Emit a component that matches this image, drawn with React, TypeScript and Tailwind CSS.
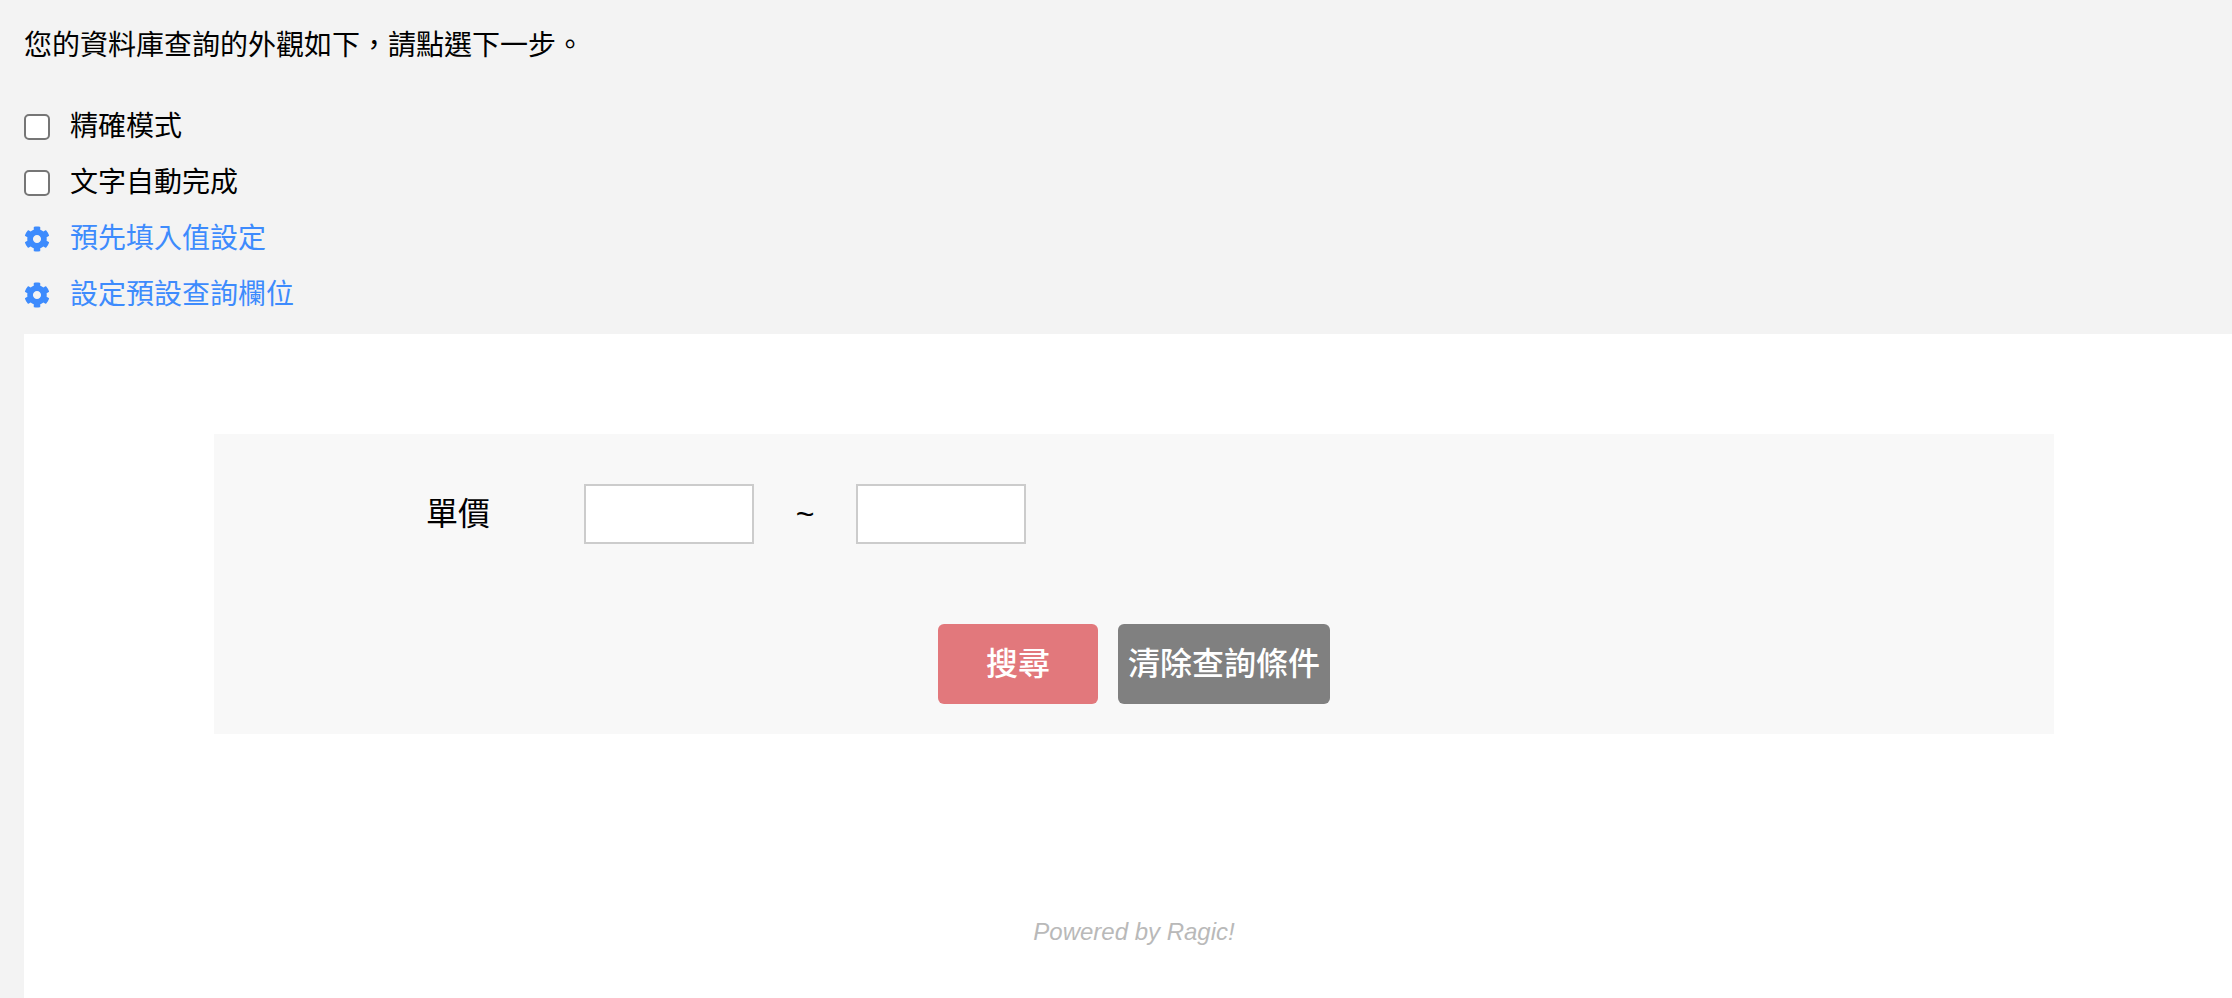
import { useState } from 'react';
import { FaCog } from 'react-icons/fa';

interface CheckOptionProps {
  id: string;
  label: string;
}

interface SettingLinkProps {
  label: string;
}

function CheckOption({ id, label }: CheckOptionProps) {
  const [checked, setChecked] = useState(false);

  return (
    <div className="flex h-14 items-center gap-5">
      <input
        id={id}
        type="checkbox"
        checked={checked}
        onChange={(e) => setChecked(e.target.checked)}
        className="size-[26px] shrink-0 appearance-none rounded-[5px] border-2 border-[#767676] bg-white checked:border-[#3d8bfd] checked:bg-[#3d8bfd]"
      />
      <label htmlFor={id}>{label}</label>
    </div>
  );
}

function SettingLink({ label }: SettingLinkProps) {
  return (
    <a href="#" className="flex h-14 w-fit items-center gap-5 text-[#3d8bfd]">
      <FaCog className="size-[26px] shrink-0" aria-hidden="true" />
      {label}
    </a>
  );
}

function QueryForm() {
  const [from, setFrom] = useState('');
  const [to, setTo] = useState('');

  const clear = () => {
    setFrom('');
    setTo('');
  };

  const inputClass = 'h-[60px] w-[170px] border-2 border-[#ccc] bg-white px-3 outline-none';

  return (
    <form
      className="mx-auto w-full max-w-[1840px] bg-[#f8f8f8] pt-[50px] pb-[30px] text-[32px] leading-[50px]"
      onSubmit={(e) => e.preventDefault()}
    >
      <div className="flex items-center pl-[212px]">
        <label htmlFor="price-from" className="w-[158px]">單價</label>
        <input id="price-from" className={inputClass} value={from} onChange={(e) => setFrom(e.target.value)} />
        <span className="w-[102px] text-center">~</span>
        <input
          id="price-to"
          aria-label="單價"
          className={inputClass}
          value={to}
          onChange={(e) => setTo(e.target.value)}
        />
      </div>

      <div className="mt-20 flex justify-center gap-5 font-medium text-white">
        <button type="submit" className="h-20 w-40 rounded-md bg-[#e2787c]">搜尋</button>
        <button type="button" onClick={clear} className="h-20 rounded-md bg-[#808080] px-[10px]">
          清除查詢條件
        </button>
      </div>
    </form>
  );
}

export default function App() {
  return (
    <div className="flex min-h-screen flex-col overflow-hidden bg-[#f3f3f3] pl-6 font-['Liberation_Sans','Noto_Sans_CJK_TC',sans-serif] text-[28px] leading-[42px] text-black">
      <p className="pt-[25px]">您的資料庫查詢的外觀如下，請點選下一步。</p>

      <div className="mt-8 mb-[11px]">
        <CheckOption id="exact-mode" label="精確模式" />
        <CheckOption id="auto-complete" label="文字自動完成" />
        <SettingLink label="預先填入值設定" />
        <SettingLink label="設定預設查詢欄位" />
      </div>

      <main className="grow bg-white pt-[100px] pb-10 pl-3">
        <QueryForm />
        <footer className="mt-[182px] text-center text-2xl text-[#b9b9b9] italic">Powered by Ragic!</footer>
      </main>
    </div>
  );
}
